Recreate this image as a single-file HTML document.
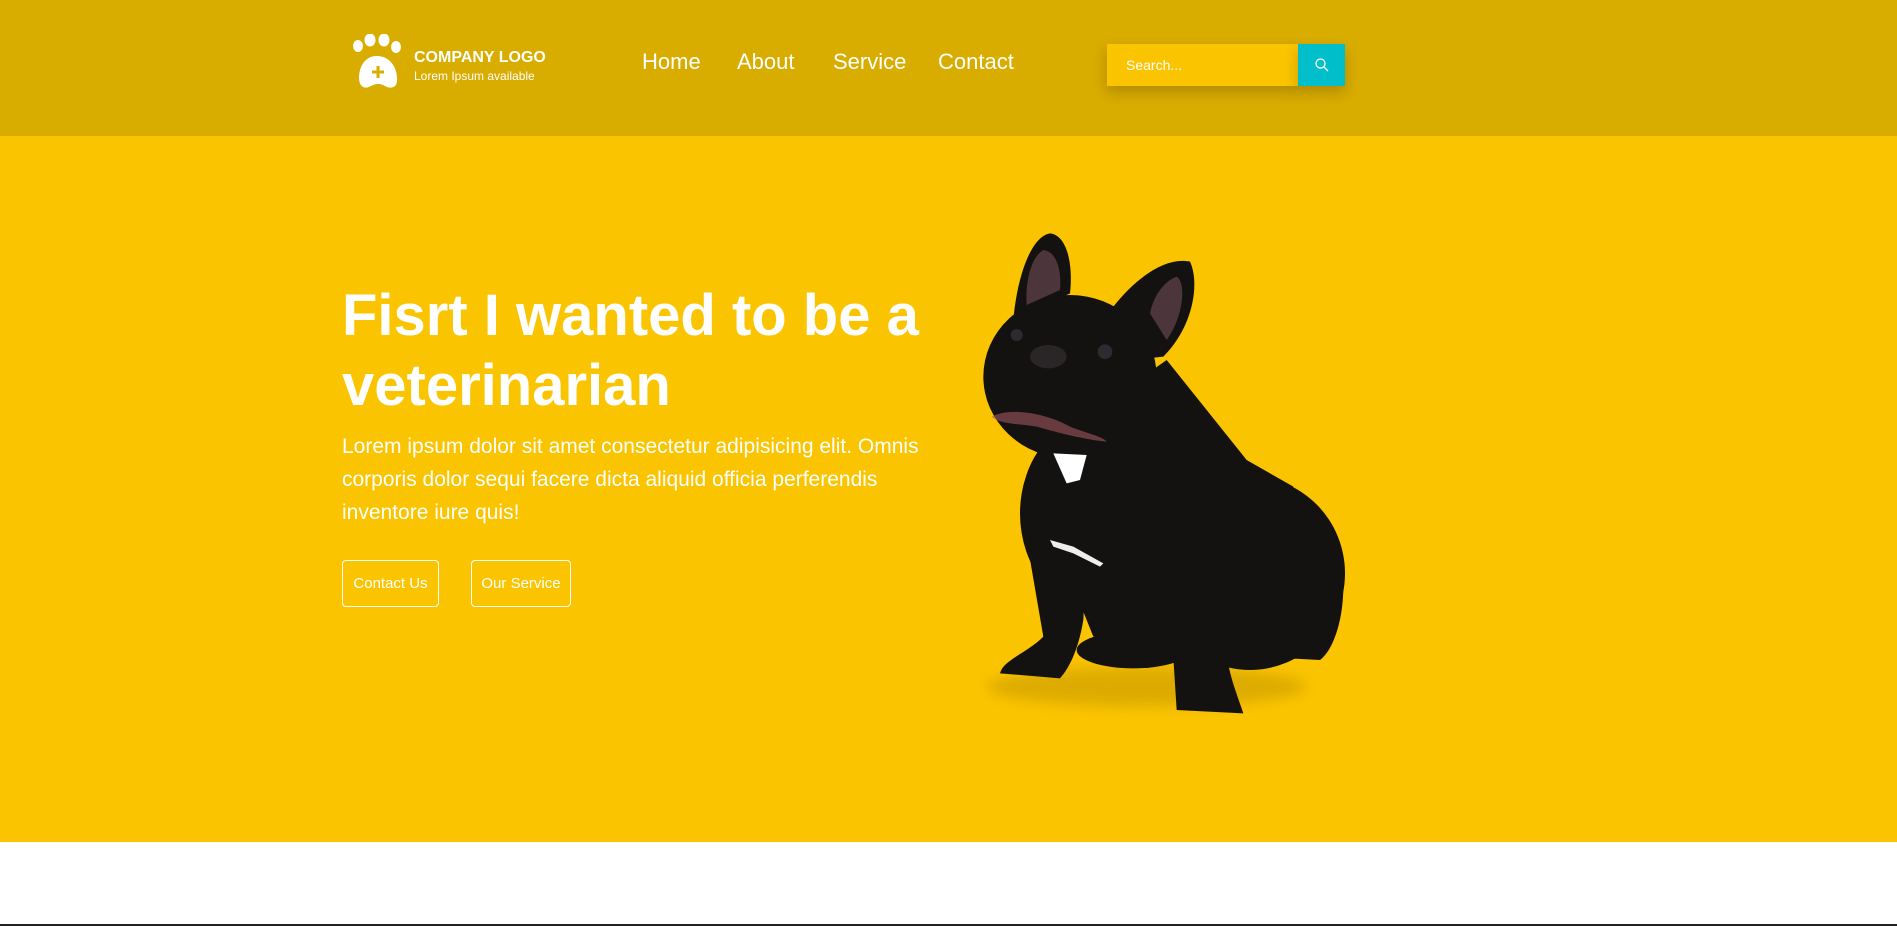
<!DOCTYPE html>
<html><head><meta charset="utf-8"><style>
*{margin:0;padding:0;box-sizing:border-box}
body{width:1897px;height:926px;overflow:hidden;background:#fff;font-family:"Liberation Sans",sans-serif;position:relative}
.hdr{position:absolute;left:0;top:0;width:1897px;height:136px;background:#d9ac00}
.hero{position:absolute;left:0;top:136px;width:1897px;height:706px;background:#fbc401}
.abs{position:absolute;color:#fff;white-space:nowrap}
.nav{top:49px;font-size:22px}
.search{position:absolute;left:1107px;top:44px;width:191px;height:42px;background:#fbc401;box-shadow:0 6px 14px rgba(0,0,0,.2)}
.sbtn{position:absolute;left:1298px;top:44px;width:47px;height:42px;background:#00bfcb;box-shadow:0 6px 14px rgba(0,0,0,.2)}
.btn{position:absolute;top:560px;height:47px;border:1px solid #fff;border-radius:4px;color:#fff;font-size:15px;line-height:45px;text-align:center}
</style></head><body>
<div class="hdr"></div>
<div class="hero"></div>
<svg style="position:absolute;left:350px;top:34px" width="60" height="56" viewBox="0 0 60 56">
<ellipse cx="8" cy="12" rx="5" ry="6" fill="#fff"/>
<ellipse cx="20" cy="6" rx="5.5" ry="6.5" fill="#fff"/>
<ellipse cx="34" cy="6" rx="5.5" ry="6.5" fill="#fff"/>
<ellipse cx="46" cy="13" rx="5" ry="6" fill="#fff"/>
<path d="M27 22C14 22 9 34 9 44C9 52 14 55 19 53C23 51 25 50 28 50C31 50 33 51 37 53C43 55 48 52 47 44C47 34 40 22 27 22Z" fill="#fff"/>
<path d="M28 32v12M22 38h12" stroke="#d9ac00" stroke-width="3"/>
</svg>
<div class="abs" style="left:414px;top:49px;font-size:16px;font-weight:bold">COMPANY LOGO</div>
<div class="abs" style="left:414px;top:69px;font-size:12px">Lorem Ipsum available</div>
<div class="abs nav" style="left:642px">Home</div>
<div class="abs nav" style="left:737px">About</div>
<div class="abs nav" style="left:833px">Service</div>
<div class="abs nav" style="left:938px">Contact</div>
<div class="search"></div>
<div class="abs" style="left:1126px;top:57px;font-size:14px">Search...</div>
<div class="sbtn"></div>
<svg style="position:absolute;left:1314px;top:57px" width="16" height="16" viewBox="0 0 16 16"><circle cx="6.5" cy="6.5" r="4.5" fill="none" stroke="#fff" stroke-width="1.3"/><path d="M10 10l4 4" stroke="#fff" stroke-width="1.3"/></svg>
<div class="abs" style="left:342px;top:281px;font-size:58px;font-weight:bold;line-height:70px">Fisrt I wanted to be a<br>veterinarian</div>
<div class="abs" style="left:342px;top:430px;font-size:21px;line-height:33px">Lorem ipsum dolor sit amet consectetur adipisicing elit. Omnis<br>corporis dolor sequi facere dicta aliquid officia perferendis<br>inventore iure quis!</div>
<div class="btn" style="left:342px;width:97px">Contact Us</div>
<div class="btn" style="left:471px;width:100px">Our Service</div>
<svg style="position:absolute;left:960px;top:220px" width="400" height="570" viewBox="0 0 1200 1710">
<defs><filter id="s" x="-20%" y="-50%" width="140%" height="200%"><feGaussianBlur stdDeviation="20"/></filter></defs>
<ellipse cx="560" cy="1400" rx="480" ry="60" fill="#b98e00" opacity=".45" filter="url(#s)"/>
<g fill="#141111">
<ellipse cx="870" cy="1060" rx="285" ry="290"/>
<ellipse cx="430" cy="880" rx="250" ry="300"/>
<path d="M420 560L620 420L860 720L1000 800L900 1250L400 1250L300 1000Z"/>
<path d="M200 960L250 1250C200 1300 130 1320 120 1360L300 1375C340 1330 360 1260 370 1200L380 1000Z"/>
<ellipse cx="520" cy="1290" rx="170" ry="55"/>
<path d="M620 1000L650 1470L850 1480C830 1420 800 1350 800 1280L820 1040Z"/>
<path d="M700 1300L1080 1320C1120 1290 1150 1200 1150 1100L800 1150Z"/>
<path d="M160 300C170 180 210 50 270 40C320 45 340 130 330 220Z"/>
<path d="M460 260C530 170 620 110 690 125C720 190 700 320 610 410L520 420Z"/>
<ellipse cx="330" cy="470" rx="260" ry="245"/>
</g>
<path d="M250 90C290 95 305 150 300 210L200 255C195 180 215 110 250 90Z" fill="#7a5560" opacity=".55"/>
<path d="M650 170C680 190 670 290 620 360L570 280C580 230 610 185 650 170Z" fill="#7a5560" opacity=".55"/>
<circle cx="170" cy="345" r="18" fill="#2c2c30"/><circle cx="435" cy="395" r="22" fill="#2c2c30"/>
<ellipse cx="265" cy="410" rx="55" ry="35" fill="#2a2628"/>
<path d="M280 700L380 705L360 780L320 790Z" fill="#fff"/>
<path d="M270 960L340 980L430 1030L420 1040L340 1000L280 980Z" fill="#eee"/>
<path d="M95 590C150 560 260 580 330 620C380 640 430 650 440 665C380 660 300 640 230 620C180 610 120 615 95 590Z" fill="#a05860" opacity=".6"/>
</svg>
<div style="position:absolute;left:0;top:924px;width:1897px;height:2px;background:#222"></div>
</body></html>
